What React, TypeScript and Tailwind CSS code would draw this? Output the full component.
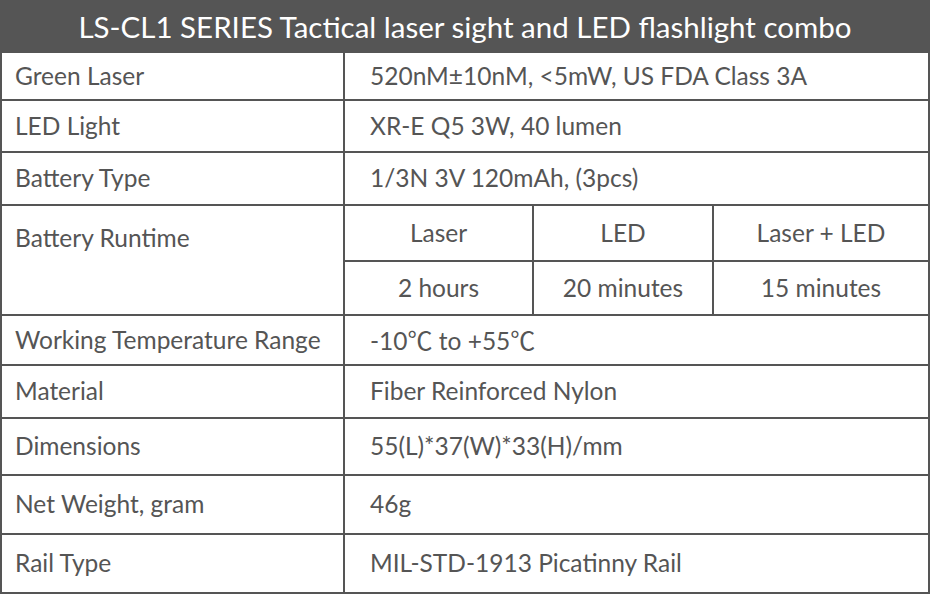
import React from "react";

const font = { fontFamily: "Lato, 'Noto Sans CJK SC', sans-serif" };
const cjk = { fontFamily: "'Noto Sans CJK SC', sans-serif", fontSize: "25px" };

function Row({ label, value, h }: { label: string; value: React.ReactNode; h: string }) {
  return (
    <div className={`flex border-b-2 border-[#555] ${h}`}>
      <div className="w-[343px] shrink-0 border-r-2 border-[#555] flex items-center pl-[13px]">{label}</div>
      <div className="flex-1 flex items-center pl-[25px]">{value}</div>
    </div>
  );
}

export default function App() {
  return (
    <div className="w-[930px] h-[597px] bg-white text-[#555] text-[24.5px] leading-none" style={font}>
      <div className="h-[53px] bg-[#555] text-white text-[29.5px] flex items-center justify-center">
        LS-CL1 SERIES Tactical laser sight and LED flashlight combo
      </div>
      <div className="border-x-2 border-[#555]">
        <Row h="h-[48px]" label="Green Laser" value="520nM±10nM, <5mW, US FDA Class 3A" />
        <Row h="h-[52px]" label="LED Light" value="XR-E Q5 3W, 40 lumen" />
        <Row h="h-[53px]" label="Battery Type" value="1/3N 3V 120mAh, (3pcs)" />
        <div className="flex border-b-2 border-[#555] h-[110px]">
          <div className="w-[343px] shrink-0 border-r-2 border-[#555] pl-[13px] pt-[20px]">Battery Runtime</div>
          <div className="flex-1 flex flex-col">
            <div className="flex h-[56px] border-b-2 border-[#555]">
              <div className="w-[189px] border-r-2 border-[#555] flex items-center justify-center">Laser</div>
              <div className="w-[180px] border-r-2 border-[#555] flex items-center justify-center">LED</div>
              <div className="flex-1 flex items-center justify-center">Laser + LED</div>
            </div>
            <div className="flex flex-1">
              <div className="w-[189px] border-r-2 border-[#555] flex items-center justify-center">2 hours</div>
              <div className="w-[180px] border-r-2 border-[#555] flex items-center justify-center">20 minutes</div>
              <div className="flex-1 flex items-center justify-center">15 minutes</div>
            </div>
          </div>
        </div>
        <Row
          h="h-[50px]"
          label="Working Temperature Range"
          value={<span>-10<span style={cjk}>℃</span> to +55<span style={cjk}>℃</span></span>}
        />
        <Row h="h-[53px]" label="Material" value="Fiber Reinforced Nylon" />
        <Row h="h-[57px]" label="Dimensions" value="55(L)*37(W)*33(H)/mm" />
        <Row h="h-[59px]" label="Net Weight, gram" value="46g" />
        <Row h="h-[59px]" label="Rail Type" value="MIL-STD-1913 Picatinny Rail" />
      </div>
    </div>
  );
}
